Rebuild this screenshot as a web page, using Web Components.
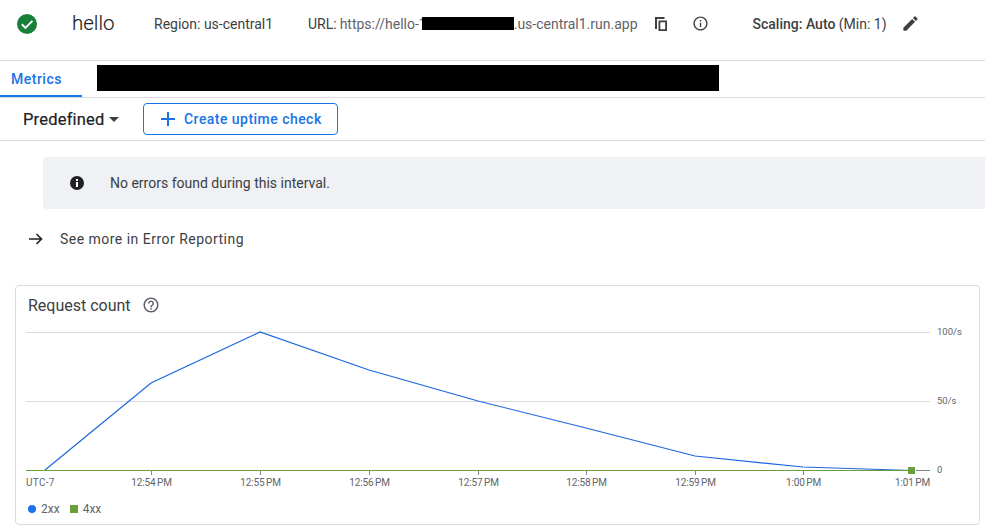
<!DOCTYPE html>
<html lang="en"><head><meta charset="utf-8"><title>hello</title>
<style>
html,body{margin:0;padding:0;background:#fff}
body{width:985px;height:530px;overflow:hidden;font-family:Roboto,"Liberation Sans",sans-serif;color:#3c4043;display:block}
</style></head><body>
<service-header></service-header>
<tab-bar></tab-bar>
<tool-bar></tool-bar>
<info-banner>No errors found during this interval.</info-banner>
<arrow-link>See more in Error Reporting</arrow-link>
<chart-card title-text="Request count"></chart-card>
<script>
function def(name, html){
  customElements.define(name, class extends HTMLElement{
    constructor(){super();this.attachShadow({mode:'open'}).innerHTML=typeof html==='function'?html(this):html;}
  });
}
def('service-header',`<style>
:host{display:flex;align-items:center;box-sizing:border-box;height:61px;padding:0 0 13px 17px;border-bottom:1px solid #dadce0;font-size:14px;color:#3c4043;white-space:nowrap}
svg{display:block;flex:none}
.name{font-size:20.5px;font-weight:300;color:#202124;margin-left:35px;width:82px;position:relative;top:-1px;-webkit-text-stroke:.15px #202124}
.region{width:154px}
.url{color:#5f6368;display:flex;align-items:center}
.url b{font-weight:400;color:#3c4043;margin-right:3px}
.red{display:inline-block;width:92px;height:13px;background:#000;margin-left:-5px}
.copy{margin-left:16px}.info{margin-left:24px}
.scale{margin-left:44px;color:#3c4043;font-weight:500;font-size:14px}
.scale span{font-weight:400}
.pen{margin-left:14px}
</style>
<svg width="20" height="20" viewBox="0 0 20 20"><circle cx="10" cy="10" r="10" fill="#188038"/><path d="M4.8 10.300l3.600 3.600 7-7" fill="none" stroke="#fff" stroke-width="2"/></svg>
<div class="name">hello</div>
<div class="region">Region: us-central1</div>
<div class="url"><b>URL:</b>https://hello-1<span class="red"></span>.us-central1.run.app</div>
<svg class="copy" width="14" height="16" viewBox="0 0 14 16" fill="#3c4043"><path d="M1 1h9.500v2H3v10H1z"/><path fill-rule="evenodd" d="M4.500 4.500H13V15H4.500zM6.300 6.200v7.100H11.200V6.200z"/></svg>
<svg class="info" width="17" height="17" viewBox="0 0 24 24" fill="#3c4043"><path d="M11 7h2v2h-2zm0 4h2v6h-2zm1-9C6.480 2 2 6.480 2 12s4.480 10 10 10 10-4.480 10-10S17.520 2 12 2zm0 18c-4.410 0-8-3.590-8-8s3.590-8 8-8 8 3.590 8 8-3.590 8-8 8z"/></svg>
<div class="scale">Scaling: Auto <span>(Min: 1)</span></div>
<svg class="pen" width="19" height="19" viewBox="0 0 24 24" fill="#3c4043"><path d="M3 17.250V21h3.750L17.810 9.940l-3.750-3.750L3 17.250zM20.710 7.040a1 1 0 0 0 0-1.410l-2.340-2.340a1 1 0 0 0-1.410 0l-1.830 1.830 3.750 3.750 1.830-1.830z"/></svg>`);
def('tab-bar',`<style>
:host{display:flex;align-items:flex-start;box-sizing:border-box;height:37px;border-bottom:1px solid #dadce0;white-space:nowrap}
.tab{box-sizing:border-box;width:82px;height:36px;padding-left:11px;line-height:36px;font-size:14px;font-weight:500;color:#1a73e8;border-bottom:2px solid #1a73e8;letter-spacing:.5px}
.red{margin:4px 0 0 15px;width:622px;height:26px;background:#000}
</style><div class="tab">Metrics</div><div class="red"></div>`);
def('tool-bar',`<style>
:host{display:flex;align-items:center;box-sizing:border-box;height:43px;padding-left:23px;border-bottom:1px solid #dadce0;white-space:nowrap}
.pre{font-size:16.500px;color:#202124;width:120px;display:flex;align-items:center;letter-spacing:.2px;-webkit-text-stroke:.2px #202124}
.pre svg{margin-left:4px}
.btn{box-sizing:border-box;height:32px;width:195px;border:1px solid #1a73e8;border-radius:4px;display:flex;align-items:center;padding-left:16px;color:#1a73e8;font-size:14px;font-weight:500;letter-spacing:.46px}
.btn svg{margin-right:8px;flex:none}
</style><div class="pre">Predefined<svg width="10" height="5" viewBox="0 0 10 5"><path d="M0 0h10L5 5z" fill="#3c4043"/></svg></div>
<div class="btn"><svg width="16" height="16" viewBox="0 0 16 16"><path d="M1 8h14M8 1v14" stroke="#1a73e8" stroke-width="2" fill="none"/></svg><span>Create uptime check</span></div>`);
def('info-banner',`<style>
:host{display:flex;align-items:center;box-sizing:border-box;margin:16px 0 0 43px;height:52px;background:#eff1f4;border-radius:4px 0 0 4px;padding-left:27px;font-size:14px;color:#3c4043}
svg{margin-right:26px;flex:none}
</style><svg width="14" height="14" viewBox="0 0 14 14"><circle cx="7" cy="7" r="7" fill="#202124"/><path d="M6 3h2v2H6zM6 6h2v5H6z" fill="#fff"/></svg><slot></slot>`);
def('arrow-link',`<style>
:host{display:flex;align-items:center;box-sizing:border-box;margin-top:19px;height:22px;padding-left:29px;font-size:14px;letter-spacing:.48px;color:#3c4043}
svg{margin-right:17px;flex:none}
</style><svg width="14" height="12" viewBox="0 0 14 12"><path d="M0 6h12.500M7.500 1l5 5-5 5" fill="none" stroke="#202124" stroke-width="1.600"/></svg><slot></slot>`);
const xs=[151,260,369,478,586,695,803,912],labels=['12:54 PM','12:55 PM','12:56 PM','12:57 PM','12:58 PM','12:59 PM','1:00 PM','1:01 PM'];
def('chart-card',el=>`<style>
:host{display:block;box-sizing:border-box;margin:35px 0 0 15px;width:965px;height:240px;border:1px solid #dadce0;border-radius:4px;position:relative}
.head{display:flex;align-items:center;height:38px;padding-left:12px;font-size:16px;color:#3c4043}
.head svg{margin-left:11px}
svg.plot{display:block;margin-top:1px}
text{font-family:Roboto,"Liberation Sans",sans-serif;font-size:10px;fill:#5f6368}
text.t{word-spacing:-1px;letter-spacing:-.1px}
text.y{font-size:9.500px}
text.z{letter-spacing:.3px}
.legend{display:flex;align-items:center;padding-left:12px;font-size:12px;color:#5f6368;height:20px;margin-top:-1px}
.dot{width:8px;height:8px;border-radius:50%;background:#1a73e8;margin-right:5px}
.sq{width:8px;height:8px;background:#689f38;margin:0 5px 0 10px}
</style>
<div class="head">${el.getAttribute('title-text')||'Request count'}<svg width="18" height="18" viewBox="0 0 24 24" fill="#5f6368"><path d="M11 18h2v-2h-2v2zm1-16C6.480 2 2 6.480 2 12s4.480 10 10 10 10-4.480 10-10S17.520 2 12 2zm0 18c-4.410 0-8-3.590-8-8s3.590-8 8-8 8 3.590 8 8-3.590 8-8 8zm0-14c-2.210 0-4 1.790-4 4h2c0-1.100.9-2 2-2s2 .9 2 2c0 2-3 1.750-3 5h2c0-2.250 3-2.500 3-5 0-2.210-1.790-4-4-4z"/></svg></div>
<svg class="plot" width="963" height="175" viewBox="16 325 963 175">
<path d="M26 332.500H930M26 401.500H930" stroke="#dadce0"/>
<path d="M916 470.500H930" stroke="#80868b"/>
${xs.slice(0,7).map(x=>`<path d="M${x}.5 471V475" stroke="#80868b"/>`).join('')}
<polyline points="45,470 151,383 260,332 369,370 478,401 586,428 695,456 803,467 912,470.500" fill="none" stroke="#1a66e0" stroke-width="1.200"/>
<path d="M26 470.500H912" stroke="#689f38" stroke-width="1.200"/>
<rect x="908" y="467" width="7" height="7" fill="#689f38"/>
<text class="y" x="937" y="335">100/s</text><text class="y" x="937" y="404">50/s</text><text class="y" x="937" y="473">0</text>
<text class="z" x="26" y="486">UTC-7</text>
${xs.map((x,i)=>`<text class="t" x="${x+.5}" y="486" text-anchor="middle">${labels[i]}</text>`).join('')}
</svg>
<div class="legend"><span class="dot"></span>2xx<span class="sq"></span>4xx</div>`);
</script>
</body></html>
